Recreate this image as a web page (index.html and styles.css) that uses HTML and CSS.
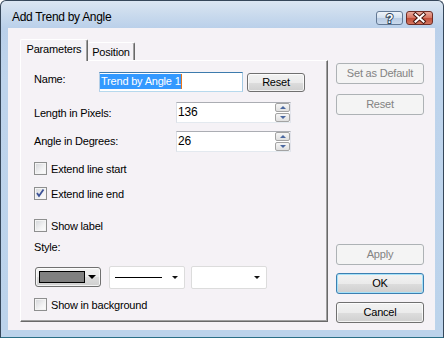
FILE: index.html
```html
<!DOCTYPE html>
<html>
<head>
<meta charset="utf-8">
<link rel="stylesheet" href="styles.css">
</head>
<body>
<div class="window">
  <div class="titlebar">
    <span class="title">Add Trend by Angle</span>
    <div class="capbtns">
      <div class="capbtn help">
        <svg width="25" height="12" viewBox="0 0 25 12"><text x="12.5" y="10.5" text-anchor="middle" font-family="Liberation Sans, sans-serif" font-size="12" font-weight="bold" fill="#ffffff" stroke="#34475f" stroke-width="2" paint-order="stroke">?</text></svg>
      </div>
      <div class="capbtn close">
        <svg width="25" height="12" viewBox="0 0 25 12"><path d="M8.5 2.5 L16.5 9.5 M16.5 2.5 L8.5 9.5" stroke="#4a1810" stroke-width="4" stroke-linecap="square"/><path d="M8.5 2.5 L16.5 9.5 M16.5 2.5 L8.5 9.5" stroke="#ffffff" stroke-width="2" stroke-linecap="square"/></svg>
      </div>
    </div>
  </div>
  <div class="client">
    <div class="main">
      <div class="tabs">
        <div class="tab active">Parameters</div>
        <div class="tab">Position</div>
      </div>
      <div class="panel">
        <div class="row r-name">
          <span class="lbl lbl-name">Name:</span>
          <div class="textbox focus"><span class="sel">Trend by Angle 1</span><span class="caret"></span></div>
          <div class="btn btn-reset">Reset</div>
        </div>
        <div class="row r-len">
          <span class="lbl lbl-spin">Length in Pixels:</span>
          <div class="spin">
            <span class="spin-val">136</span>
            <div class="spin-btns">
              <div class="spin-btn"><span class="tri-up"></span></div>
              <div class="spin-btn"><span class="tri-down"></span></div>
            </div>
          </div>
        </div>
        <div class="row r-ang">
          <span class="lbl lbl-spin">Angle in Degrees:</span>
          <div class="spin">
            <span class="spin-val">26</span>
            <div class="spin-btns">
              <div class="spin-btn"><span class="tri-up"></span></div>
              <div class="spin-btn"><span class="tri-down"></span></div>
            </div>
          </div>
        </div>
        <div class="check c1"><span class="cb"></span><span class="cb-lbl">Extend line start</span></div>
        <div class="check c2"><span class="cb"><svg width="11" height="11" viewBox="0 0 11 11"><path d="M2 5 L4 8 L8.5 1.5" fill="none" stroke="#3c5297" stroke-width="1.8"/></svg></span><span class="cb-lbl">Extend line end</span></div>
        <div class="check c3"><span class="cb"></span><span class="cb-lbl">Show label</span></div>
        <div class="lbl style-lbl">Style:</div>
        <div class="row combos">
          <div class="ccombo"><span class="swatch"></span><span class="arrow-big"></span></div>
          <div class="lcombo"><span class="line"></span><span class="arrow-small"></span></div>
          <div class="lcombo third"><span class="arrow-small"></span></div>
        </div>
        <div class="check c4"><span class="cb"></span><span class="cb-lbl">Show in background</span></div>
      </div>
    </div>
    <div class="side">
      <div class="btn dis">Set as Default</div>
      <div class="btn dis b-reset2">Reset</div>
      <div class="btn dis b-apply">Apply</div>
      <div class="btn def b-gap">OK</div>
      <div class="btn b-gap">Cancel</div>
    </div>
  </div>
</div>
</body>
</html>
```
FILE: styles.css
```css
body {
  margin: 0;
  font-family: "Liberation Sans", Arial, sans-serif;
  font-size: 11px;
  letter-spacing: -0.2px;
  color: #000;
}

.window {
  width: 444px;
  height: 338px;
  box-sizing: border-box;
  border: 1px solid #36475a;
  border-bottom-color: #2a6f86;
  border-radius: 6px 6px 0 0;
  background: linear-gradient(to bottom, #dbe6f2 0px, #c9daed 14px, #bad0ea 27px, #bed4ec 80px, #bcd3eb 100%);
  display: flex;
  flex-direction: column;
  overflow: hidden;
}

.titlebar {
  height: 27px;
  flex-shrink: 0;
  display: flex;
  align-items: flex-start;
}

.title {
  margin: 9px 0 0 11px;
  font-size: 12px;
  line-height: 15px;
  letter-spacing: -0.3px;
}

.capbtns {
  margin: 10px 10px 0 auto;
  display: flex;
  gap: 3px;
}

.capbtn {
  width: 27px;
  height: 14px;
  box-sizing: border-box;
  border: 1px solid;
  border-radius: 3px;
  display: flex;
}

.help {
  border-color: #627894;
  background: linear-gradient(#eef3f9, #d3e0ef 50%, #b9cce4 51%, #cadaed);
}

.close {
  border-color: #6f2d25;
  background: linear-gradient(#eaab9e, #d5735f 50%, #c14b36 51%, #d3765f);
}

.client {
  flex: 1;
  margin: 0 8px 7px 7px;
  background: #f5f2f6;
  display: flex;
}

.main {
  padding: 11px 0 0 12px;
  display: flex;
  flex-direction: column;
}

.tabs {
  height: 21px;
  display: flex;
  align-items: flex-end;
}

.tab {
  width: 47px;
  height: 18px;
  box-sizing: border-box;
  border-top: 1px solid #fff;
  border-right: 1px solid #696969;
  box-shadow: inset -1px 0 #a0a0a0;
  border-radius: 2px 2px 0 0;
  padding-top: 2px;
  line-height: 14px;
  text-align: center;
}

.tab.active {
  width: 68px;
  height: 22px;
  margin-bottom: -1px;
  border-left: 1px solid #fff;
  background: #f5f2f6;
  position: relative;
  z-index: 1;
}

.panel {
  width: 308px;
  height: 262px;
  box-sizing: border-box;
  border: 1px solid;
  border-color: #fff #696969 #696969 #fff;
  box-shadow: inset -1px -1px #a0a0a0;
  padding: 11px 0 0 13px;
  display: flex;
  flex-direction: column;
}

.row {
  display: flex;
  align-items: flex-start;
}

.lbl {
  line-height: 14px;
}

.lbl-name {
  width: 65px;
}

.lbl-spin {
  width: 142px;
}

.r-len {
  margin-top: 10px;
}

.r-len .lbl {
  margin-top: 4px;
}

.r-ang {
  margin-top: 8px;
}

.r-ang .lbl {
  margin-top: 3px;
}

.textbox {
  width: 144px;
  height: 20px;
  box-sizing: border-box;
  border: 1px solid;
  border-color: #3d7bad #a4c9e3 #b7d9ed #b5cfe7;
  background: #fff;
  padding: 1px 0 0 0;
  display: flex;
  align-items: flex-start;
}

.sel {
  background: #3399ff;
  color: #fff;
  line-height: 15px;
  padding-left: 1px;
}

.caret {
  width: 1px;
  height: 15px;
  background: #e8771c;
}

.btn {
  height: 21px;
  box-sizing: border-box;
  border: 1px solid #707070;
  border-radius: 3px;
  background: linear-gradient(#f2f2f2, #ebebeb 50%, #dddddd 51%, #cfcfcf);
  box-shadow: inset 0 0 0 1px rgba(255, 255, 255, 0.75);
  text-align: center;
  line-height: 19px;
}

.btn-reset {
  width: 58px;
  height: 19px;
  line-height: 17px;
  margin: 1px 0 0 4px;
}

.spin {
  width: 115px;
  height: 21px;
  box-sizing: border-box;
  border: 1px solid;
  border-color: #abadb3 #e2e3ea #e3e9ef #dbdfe6;
  background: #fff;
  display: flex;
}

.spin-val {
  flex: 1;
  padding-left: 1px;
  line-height: 19px;
  font-size: 12px;
}

.spin-btns {
  width: 15px;
  display: flex;
  flex-direction: column;
  gap: 1px;
}

.spin-btn {
  flex: 1;
  box-sizing: border-box;
  border: 1px solid #a3a3a3;
  border-radius: 2px;
  background: linear-gradient(#f6f6f6, #e0e0e0);
  display: flex;
  align-items: center;
  justify-content: center;
}

.tri-up {
  border-left: 3px solid transparent;
  border-right: 3px solid transparent;
  border-bottom: 3px solid #4b68a0;
}

.tri-down {
  border-left: 3px solid transparent;
  border-right: 3px solid transparent;
  border-top: 3px solid #4b68a0;
}

.check {
  height: 13px;
  display: flex;
  align-items: center;
}

.c1 { margin-top: 10px; }
.c2 { margin-top: 12px; }
.c3 { margin-top: 19px; }
.c4 { margin-top: 9px; }

.cb {
  width: 13px;
  height: 13px;
  box-sizing: border-box;
  border: 1px solid #8e8f8f;
  background: linear-gradient(135deg, #d2d4d8, #f2f2f3 60%, #fdfdfd);
  box-shadow: inset 0 0 0 1px #f4f4f4;
  display: flex;
}

.cb-lbl {
  margin-left: 4px;
  line-height: 14px;
}

.style-lbl {
  margin-top: 8px;
}

.combos {
  margin-top: 12px;
}

.ccombo {
  margin: 1px 0 0 1px;
  width: 66px;
  height: 20px;
  box-sizing: border-box;
  border: 1px solid #707070;
  border-radius: 3px;
  background: linear-gradient(#f2f2f2, #ebebeb 50%, #dddddd 51%, #cfcfcf);
  box-shadow: inset 0 0 0 1px rgba(255, 255, 255, 0.75);
  padding-left: 3px;
  display: flex;
  align-items: center;
}

.swatch {
  width: 46px;
  height: 12px;
  box-sizing: border-box;
  border: 1px solid #000;
  background: #808080;
}

.arrow-big {
  margin-left: 3px;
  border-left: 4px solid transparent;
  border-right: 4px solid transparent;
  border-top: 4px solid #000;
}

.lcombo {
  margin-left: 8px;
  width: 76px;
  height: 23px;
  box-sizing: border-box;
  border: 1px solid #dcdcdc;
  border-radius: 2px;
  background: #fff;
  padding: 0 6px 0 5px;
  display: flex;
  align-items: center;
}

.lcombo.third {
  margin-left: 6px;
}

.line {
  width: 47px;
  height: 1px;
  background: #000;
}

.arrow-small {
  margin-left: auto;
  border-left: 3px solid transparent;
  border-right: 3px solid transparent;
  border-top: 3px solid #111;
}

.side {
  width: 88px;
  margin-left: 8px;
  padding: 35px 0 7px;
  display: flex;
  flex-direction: column;
}

.btn.dis {
  border-color: #adb2b5;
  background: #f4f4f4;
  box-shadow: none;
  color: #838383;
}

.b-reset2 {
  margin-top: 10px;
}

.b-apply {
  margin-top: auto;
}

.b-gap {
  margin-top: 8px;
}

.btn.def {
  border-color: #3c7fb1;
  box-shadow: inset 0 0 0 1px #a6e1f8;
}
```
